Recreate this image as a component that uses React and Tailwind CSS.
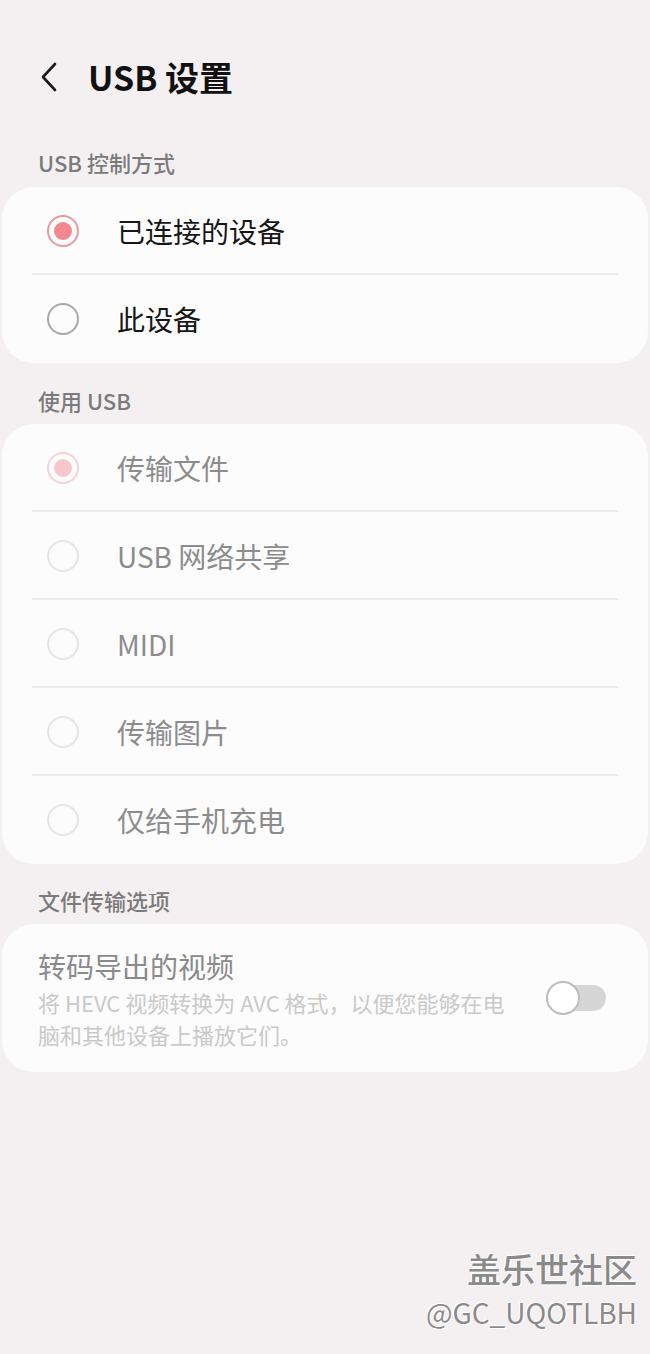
import React from "react";

const font = { fontFamily: '"Noto Sans CJK SC", "Noto Sans", sans-serif' };

function Radio({ checked, disabled }) {
  if (checked) {
    return (
      <div
        className={`w-[32px] h-[32px] rounded-full border-2 flex items-center justify-center ${
          disabled ? "border-[#f3d3d5]" : "border-[#e79aa0]"
        }`}
      >
        <div className={`w-[18px] h-[18px] rounded-full ${disabled ? "bg-[#f6c8cc]" : "bg-[#f2878f]"}`} />
      </div>
    );
  }
  return (
    <div
      className={`w-[32px] h-[32px] rounded-full border-2 ${
        disabled ? "border-[#e4e4e4]" : "border-[#a8a8a8]"
      }`}
    />
  );
}

function Row({ label, checked, disabled, last }) {
  return (
    <div className="relative h-[88px] flex items-center pl-[45px]">
      <Radio checked={checked} disabled={disabled} />
      <span
        className={`ml-[38px] text-[28px] leading-none ${disabled ? "text-[#8c8c8c]" : "text-[#161616]"}`}
      >
        {label}
      </span>
      {!last && <div className="absolute left-[30px] right-[30px] bottom-0 h-[2px] bg-[#ececec]" />}
    </div>
  );
}

function SectionLabel({ children, className = "" }) {
  return (
    <div className={`pl-[38px] text-[22px] leading-none font-medium text-[#7b7b7b] ${className}`}>{children}</div>
  );
}

export default function App() {
  return (
    <div className="w-[650px] h-[1354px] bg-[#f4f0f1] relative overflow-hidden" style={font}>
      {/* Header */}
      <div className="h-[140px] flex items-center pt-[14px]">
        <svg className="ml-[38px]" width="22" height="34" viewBox="0 0 22 34" fill="none">
          <path d="M17 4 L5 17 L17 30" stroke="#1a1a1a" strokeWidth="2.6" strokeLinecap="round" strokeLinejoin="round" />
        </svg>
        <h1 className="ml-[28px] text-[34px] font-bold text-[#111] leading-none">USB 设置</h1>
      </div>

      <SectionLabel className="mt-[11px]">USB 控制方式</SectionLabel>
      <div className="mt-[14px] mx-[2px] bg-[#fcfcfc] rounded-[32px]">
        <Row label="已连接的设备" checked />
        <Row label="此设备" last />
      </div>

      <SectionLabel className="mt-[26px]">使用 USB</SectionLabel>
      <div className="mt-[13px] mx-[2px] bg-[#fcfcfc] rounded-[32px]">
        <Row label="传输文件" checked disabled />
        <Row label="USB 网络共享" disabled />
        <Row label="MIDI" disabled />
        <Row label="传输图片" disabled />
        <Row label="仅给手机充电" disabled last />
      </div>

      <SectionLabel className="mt-[25px]">文件传输选项</SectionLabel>
      <div className="mt-[13px] mx-[2px] bg-[#fcfcfc] rounded-[32px] h-[148px] flex items-center pl-[36px] pr-[42px]">
        <div className="flex-1 pt-[6px]">
          <div className="text-[28px] leading-none text-[#8a8a8a]">转码导出的视频</div>
          <div className="mt-[6px] text-[22px] leading-[32px] text-[#c9c9c9] whitespace-nowrap">
            <div>将 HEVC 视频转换为 AVC 格式，以便您能够在电</div>
            <div>脑和其他设备上播放它们。</div>
          </div>
        </div>
        <div className="relative w-[60px] h-[34px]">
          <div className="absolute left-[6px] right-0 top-[4px] h-[26px] rounded-full bg-[#d6d6d6]" />
          <div className="absolute left-0 top-0 w-[34px] h-[34px] rounded-full bg-white border-2 border-[#bdbdbd]" />
        </div>
      </div>

      {/* Watermark */}
      <div
        className="absolute right-[13px] top-[1252px] text-right text-[#8a8a8a] leading-none"
        style={{ textShadow: "1px 1px 0 #fff, -1px -1px 0 #fff" }}
      >
        <div className="text-[34px] font-medium">盖乐世社区</div>
        <div className="mt-[12px] text-[28px]">@GC_UQOTLBH</div>
      </div>
    </div>
  );
}
